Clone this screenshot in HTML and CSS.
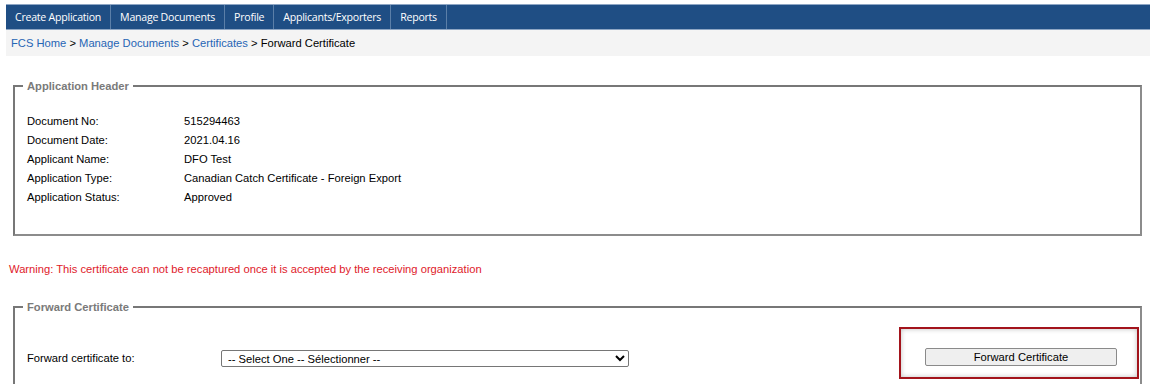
FILE: index.html
```html
<!DOCTYPE html>
<html lang="en">
<head>
    <meta charset="UTF-8">
    <title>Forward Certificate</title>
    <link rel="stylesheet" href="styles.css">
</head>
<body>
    <div class="page">

        <!-- Main menu -->
        <ul class="menu">
            <li><a href="#">Create Application</a></li>
            <li><a href="#">Manage Documents</a></li>
            <li><a href="#">Profile</a></li>
            <li><a href="#">Applicants/Exporters</a></li>
            <li><a href="#">Reports</a></li>
        </ul>

        <!-- Breadcrumb -->
        <div class="crumbs">
            <a href="#">FCS Home</a> &gt; <a href="#">Manage Documents</a> &gt; <a href="#">Certificates</a> &gt; Forward Certificate
        </div>

        <div class="content">
            <fieldset class="box header-box">
                <legend>Application Header</legend>
                <div class="details">
                    <span>Document No:</span><span>515294463</span>
                    <span>Document Date:</span><span>2021.04.16</span>
                    <span>Applicant Name:</span><span>DFO Test</span>
                    <span>Application Type:</span><span>Canadian Catch Certificate - Foreign Export</span>
                    <span>Application Status:</span><span>Approved</span>
                </div>
            </fieldset>

            <p class="warning">Warning: This certificate can not be recaptured once it is accepted by the receiving organization</p>

            <fieldset class="box forward-box">
                <legend>Forward Certificate</legend>
                <div class="forward-row">
                    <label for="target">Forward certificate to:</label>
                    <select id="target">
                        <option>-- Select One -- Sélectionner --</option>
                    </select>
                    <div class="highlight">
                        <button type="button">Forward Certificate</button>
                    </div>
                </div>
            </fieldset>
        </div>
    </div>
</body>
</html>
```

FILE: styles.css
```css
/* Global */
* {
    box-sizing: border-box;
}

body {
    margin: 0;
    font-family: "Liberation Sans", Arial, sans-serif;
    font-size: 11.2px;
    color: #000;
    background: #fff;
    overflow: hidden;
}

.page {
    padding: 4px 0 0 6px;
}

/* Menu bar */
.menu {
    display: flex;
    list-style: none;
    margin: 0;
    padding: 0;
    height: 26px;
    background: #1f4e84;
    border-top: 1px solid #8ea6c4;
    border-bottom: 1px solid #8ea6c4;
}

.menu li {
    border-right: 1px solid #5b7fa8;
}

.menu a {
    display: block;
    line-height: 24px;
    padding: 0 9px;
    color: #fff;
    text-decoration: none;
    font-family: "Open Sans", sans-serif;
    font-size: 10.6px;
    letter-spacing: -0.25px;
}

/* Breadcrumb */
.crumbs {
    height: 26px;
    line-height: 26px;
    padding-left: 5px;
    background: #f4f4f4;
}

.crumbs a {
    color: #2665b5;
    text-decoration: none;
}

/* Content */
.content {
    padding-top: 24px;
}

.box {
    margin: 0 8px 0 7px;
    border: 2px solid #8c8c8c;
    border-top-color: #777;
    border-left-color: #777;
    padding: 0 12px;
}

.box legend {
    padding: 0 4px;
    margin-left: -4px;
    color: #7a7a7a;
    font-weight: bold;
    font-size: 11.2px;
}

.header-box {
    padding-top: 20px;
    padding-bottom: 27px;
}

.details {
    display: grid;
    grid-template-columns: 157px 1fr;
    grid-auto-rows: 19px;
    line-height: 19px;
}

.warning {
    margin: 27px 0 0 3px;
    color: #e0202a;
}

.forward-box {
    margin-top: 26px;
    padding-right: 1px;
    height: 90px;
}

.forward-row {
    display: flex;
    align-items: flex-start;
    margin-top: 13px;
}

.forward-row label {
    width: 194px;
    margin-top: 26px;
}

.forward-row select {
    width: 408px;
    height: 17px;
    margin-top: 24px;
    padding: 0 2px;
    font-family: "Liberation Sans", Arial, sans-serif;
    font-size: 11.2px;
    border: 1px solid #767676;
    border-radius: 2px;
    background: #fff;
}

/* Highlight around the action button */
.highlight {
    margin: 1px 0 0 auto;
    width: 240px;
    height: 52px;
    padding: 19px 20px 0 24px;
    border: 2px solid #a3141c;
    box-shadow: inset 0 0 5px rgba(0, 0, 0, 0.25);
}

.highlight button {
    width: 192px;
    height: 18px;
    padding: 0;
    font-family: "Liberation Sans", Arial, sans-serif;
    font-size: 11.2px;
    color: #000;
    background: #efefef;
    border: 1px solid #8a8a8a;
    border-radius: 2px;
}
```
